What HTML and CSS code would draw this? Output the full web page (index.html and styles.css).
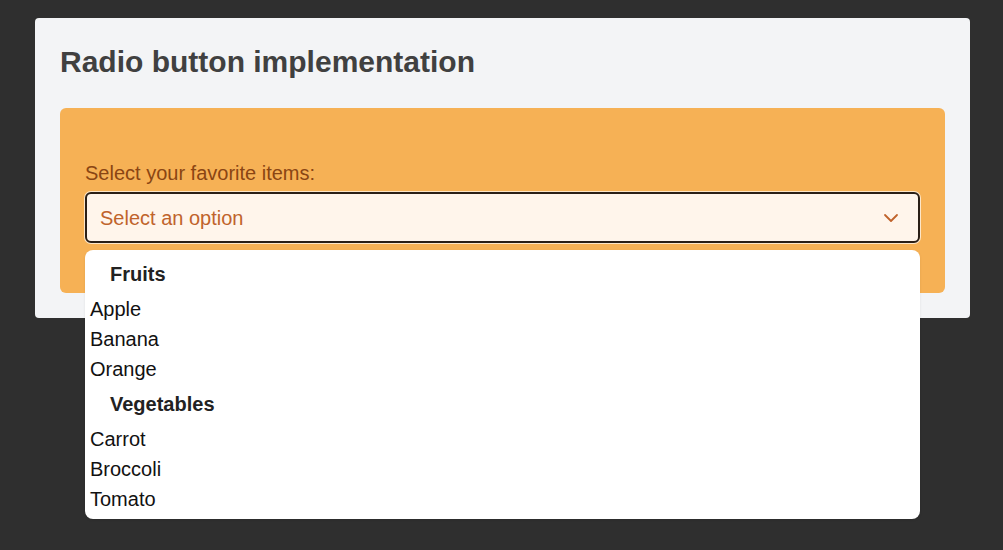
FILE: index.html
```html
<!DOCTYPE html>
<html>
<head>
<meta charset="utf-8">
<link rel="stylesheet" href="styles.css">
</head>
<body>
<div class="card">
  <h1 class="title">Radio button implementation</h1>
  <div class="panel">
    <label class="label">Select your favorite items:</label>
    <div class="select-wrap">
      <div class="select">
        <span class="placeholder">Select an option</span>
        <svg class="chevron" width="16" height="16" viewBox="0 0 16 16"><path d="M2 5l6 6 6-6" fill="none" stroke="#c0632b" stroke-width="1.8" stroke-linecap="round" stroke-linejoin="round"/></svg>
      </div>
      <div class="menu">
        <div class="group">Fruits</div>
        <div class="item">Apple</div>
        <div class="item">Banana</div>
        <div class="item">Orange</div>
        <div class="group">Vegetables</div>
        <div class="item">Carrot</div>
        <div class="item">Broccoli</div>
        <div class="item">Tomato</div>
      </div>
    </div>
  </div>
</div>
</body>
</html>
```
FILE: styles.css
```css
html, body {
  margin: 0;
  padding: 0;
}
body {
  background: #2f2f2f;
  font-family: "Liberation Sans", Arial, sans-serif;
  padding: 18px 33px 0 35px;
  height: 550px;
  box-sizing: border-box;
}
.card {
  background: #f3f4f6;
  border-radius: 4px;
  padding: 25px 25px 25px 25px;
  width: 935px;
  box-sizing: border-box;
}
.title {
  margin: 0 0 28px 0;
  padding-top: 1px;
  font-size: 30px;
  line-height: 36px;
  font-weight: bold;
  color: #404040;
}
.panel {
  background: #f6b155;
  border-radius: 6px;
  padding: 51px 25px 50px 25px;
}
.label {
  display: block;
  font-size: 20px;
  line-height: 28px;
  color: #8a4513;
  margin-bottom: 5px;
}
.select-wrap {
  position: relative;
}
.select {
  height: 51px;
  box-sizing: border-box;
  border: 2px solid #2a1f16;
  border-radius: 6px;
  background: #fff5eb;
  display: flex;
  align-items: center;
  justify-content: space-between;
  padding: 1px 19px 0 13px;
  box-shadow: 0 0 0 1px #fde6c8;
}
.placeholder {
  font-size: 20px;
  color: #c0632b;
}
.chevron {
  display: block;
}
.menu {
  position: absolute;
  left: 0;
  right: 0;
  top: calc(100% + 7px);
  background: #ffffff;
  border-radius: 8px;
  padding: 4px 0 5px 0;
  box-shadow: 0 1px 3px rgba(0,0,0,0.08);
}
.group {
  height: 40px;
  line-height: 40px;
  padding-left: 25px;
  font-size: 20px;
  font-weight: bold;
  color: #222222;
}
.item {
  height: 30px;
  line-height: 30px;
  padding-left: 5px;
  font-size: 20px;
  color: #111111;
}
```
